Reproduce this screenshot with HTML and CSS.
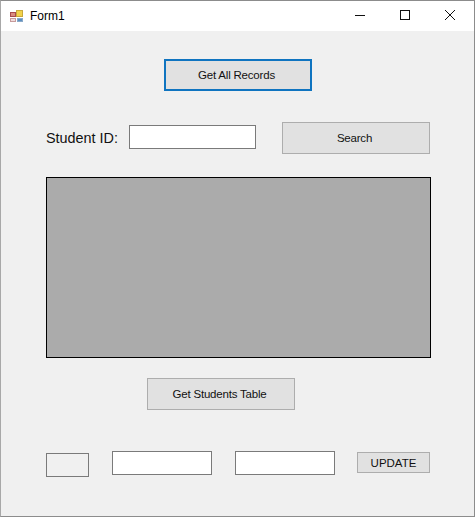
FILE: index.html
```html
<!DOCTYPE html>
<html lang="en">
<head>
<meta charset="utf-8">
<title>Form1</title>
<link rel="stylesheet" href="styles.css">
</head>
<body>
<div class="window">
  <header class="titlebar">
    <svg class="app-icon" width="16" height="16" viewBox="0 0 16 16" aria-hidden="true">
      <rect x="1" y="4" width="6" height="5" fill="#a84a4a"/>
      <rect x="2" y="5" width="4" height="3" fill="#d98b80"/>
      <rect x="1.5" y="10.5" width="5" height="3" fill="#f0dcdc" stroke="#c79a9a"/>
      <rect x="7.5" y="2.5" width="6" height="6" fill="#f2d24a" stroke="#c9a93a"/>
      <rect x="8.5" y="10.5" width="5" height="3" fill="#5c8fc0" stroke="#8aa9c8"/>
    </svg>
    <span class="title">Form1</span>
    <div class="controls">
      <svg class="ctl" width="46" height="30" viewBox="0 0 46 30" aria-hidden="true"><path d="M20 14.5H30" stroke="#111" fill="none"/></svg>
      <svg class="ctl" width="46" height="30" viewBox="0 0 46 30" aria-hidden="true"><rect x="19.5" y="9.5" width="9" height="9" stroke="#111" fill="none"/></svg>
      <svg class="ctl" width="46" height="30" viewBox="0 0 46 30" aria-hidden="true"><path d="M18 9L28 19M28 9L18 19" stroke="#111" fill="none"/></svg>
    </div>
  </header>
  <main class="client">
    <div class="row-top">
      <button class="btn btn-focus" type="button">Get All Records</button>
    </div>
    <div class="row-search">
      <label class="label" for="sid">Student ID:</label>
      <input class="field field-id" id="sid" type="text">
      <button class="btn btn-search" type="button">Search</button>
    </div>
    <div class="grid-view"></div>
    <div class="row-table">
      <button class="btn" type="button">Get Students Table</button>
    </div>
    <div class="row-bottom">
      <input class="field field-small" type="text" disabled>
      <input class="field field-wide" type="text">
      <input class="field field-wide" type="text">
      <button class="btn btn-update" type="button">UPDATE</button>
    </div>
  </main>
</div>
</body>
</html>
```

FILE: styles.css
```css
* { box-sizing: border-box; }
html, body { margin: 0; padding: 0; }
body {
  width: 475px;
  height: 517px;
  overflow: hidden;
  font-family: "Liberation Sans", Arial, sans-serif;
  color: #111;
}
.window {
  width: 475px;
  height: 517px;
  display: flex;
  flex-direction: column;
  background: #f0f0f0;
  border: 1px solid #8c8c8c;
  border-left-color: #a8a8a8;
}
.titlebar {
  height: 30px;
  flex: none;
  display: flex;
  align-items: flex-start;
  background: #fff;
  padding: 7px 0 0 8px;
}
.app-icon { flex: none; }
.title { margin-left: 5px; font-size: 12px; line-height: 16px; color: #000; }
.controls { margin: -7px 1px 0 auto; display: flex; }
.ctl { display: block; }
.client { flex: 1; padding: 28px 0 0 45px; }
.btn {
  display: block;
  width: 148px;
  height: 32px;
  padding: 0 3px 0 0;
  margin: 0;
  background: #e1e1e1;
  border: 1px solid #adadad;
  font: 11.5px "Liberation Sans", Arial, sans-serif;
  letter-spacing: -0.2px;
  color: #111;
}
.btn-focus { border: 2px solid #0f74c0; }
.field {
  display: block;
  margin: 0;
  padding: 0;
  background: #fff;
  border: 1px solid #7a7a7a;
  height: 24px;
}
.row-top { padding-left: 118px; }
.row-search {
  margin-top: 31px;
  display: flex;
  align-items: flex-start;
  height: 32px;
}
.label { width: 83px; font-size: 14.4px; line-height: 32px; flex: none; }
.field-id { width: 127px; margin-top: 3px; }
.btn-search { margin-left: 26px; }
.grid-view {
  margin-top: 23px;
  width: 385px;
  height: 181px;
  background: #ababab;
  border: 1px solid #000;
}
.row-table { margin-top: 20px; padding-left: 101px; }
.row-bottom {
  margin-top: 41px;
  display: flex;
  align-items: flex-start;
}
.field-small { width: 43px; margin-top: 2px; background: #f0f0f0; }
.field-wide { width: 100px; }
.field-small + .field-wide { margin-left: 23px; }
.field-wide + .field-wide { margin-left: 23px; }
.btn-update { width: 73px; height: 21px; margin: 1px 0 0 22px; padding: 0; letter-spacing: 0; }
```
